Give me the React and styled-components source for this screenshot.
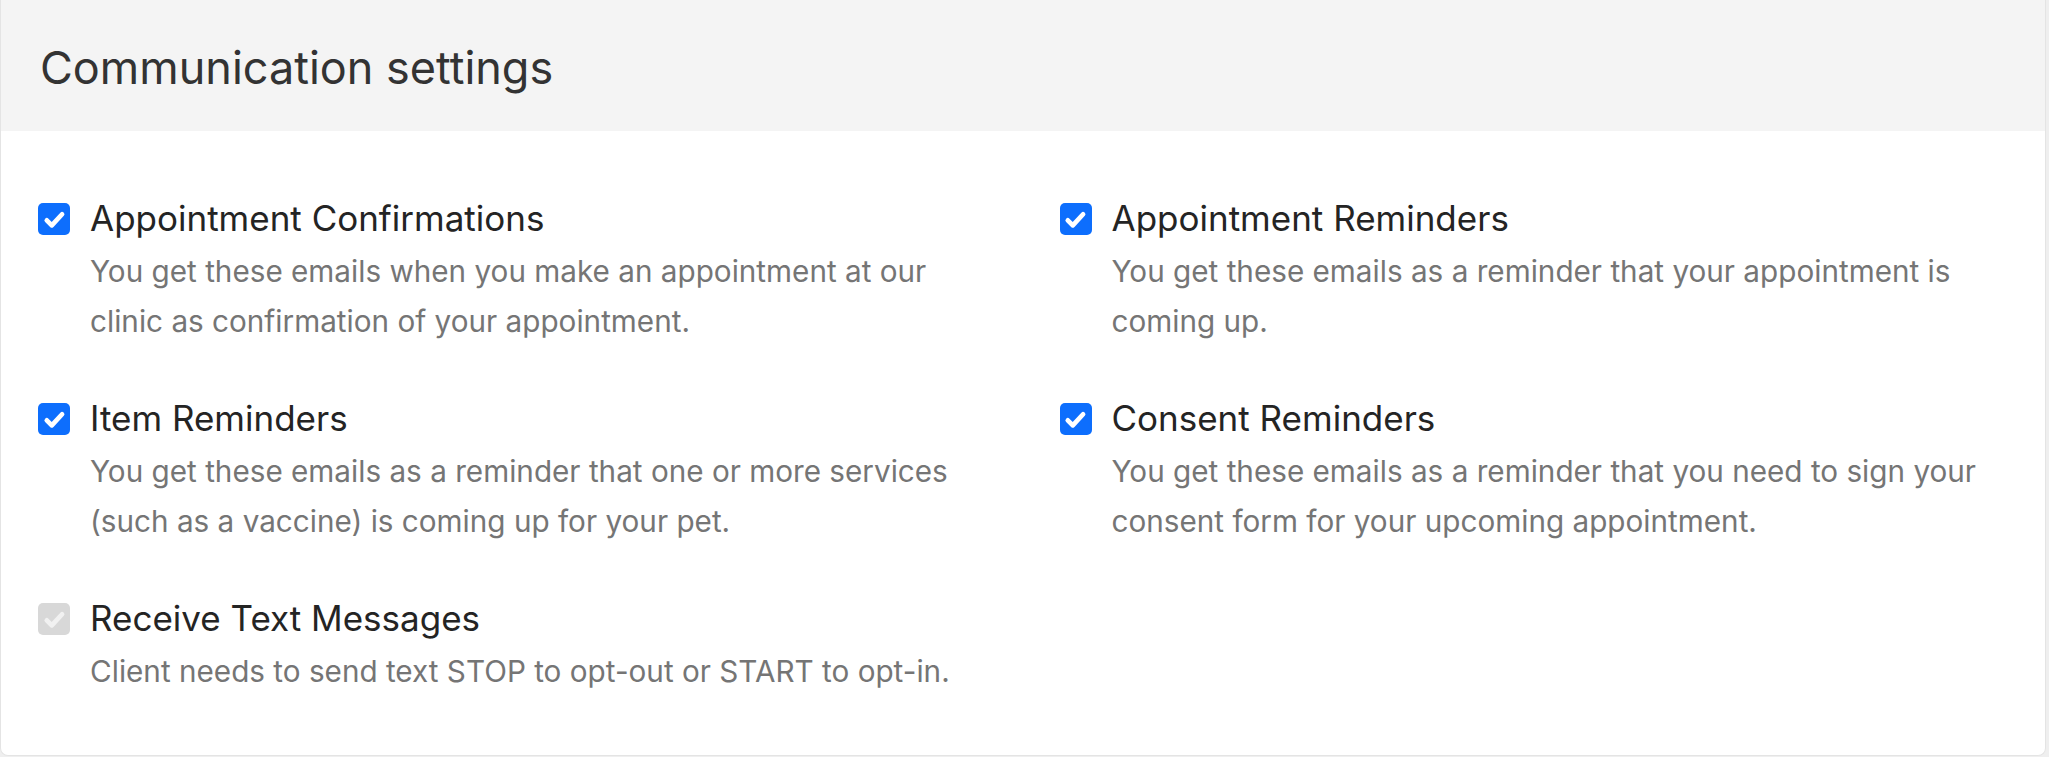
import React from "react";
import styled, { createGlobalStyle } from "styled-components";

const Global = createGlobalStyle`
  html, body { margin: 0; padding: 0; background: #efefef; }
  body { font-family: Inter, "Noto Sans", sans-serif; -webkit-font-smoothing: antialiased; }
`;

const Card = styled.section`
  width: 2046px;
  height: 756px;
  box-sizing: border-box;
  background: #ffffff;
  border: 1px solid #e4e4e4;
  border-top: none;
  border-radius: 0 0 8px 8px;
  overflow: hidden;
  display: flex;
  flex-direction: column;
`;

const Header = styled.header`
  height: 131px;
  flex: none;
  background: #f4f4f4;
  display: flex;
  align-items: center;
  padding: 5px 0 0 39px;
  box-sizing: border-box;
`;

const Title = styled.h2`
  margin: 0;
  font-size: 45px;
  font-weight: 400;
  color: #333333;
  line-height: 54px;
`;

const Body = styled.div`
  padding: 66px 37px 0 37px;
  display: grid;
  grid-template-columns: 1fr 1fr;
  column-gap: 73px;
  row-gap: 51px;
  align-content: start;
`;

const Option = styled.div`
  display: flex;
  align-items: flex-start;
  gap: 20px;
`;

const Box = styled.span`
  flex: none;
  width: 32px;
  height: 32px;
  margin-top: 6px;
  border-radius: 5px;
  background: ${(p) => (p.$disabled ? "#d8d8d8" : "#0d6efd")};
  display: flex;
  align-items: center;
  justify-content: center;
`;

const Text = styled.div`
  display: flex;
  flex-direction: column;
  min-width: 0;
`;

const Label = styled.div`
  font-size: 35px;
  line-height: 43px;
  color: #242424;
`;

const Desc = styled.div`
  margin-top: 6px;
  font-size: 29.7px;
  line-height: 50px;
  color: #757575;
`;

function Check({ disabled }) {
  return (
    <Box $disabled={disabled}>
      <svg width="27" height="27" viewBox="0 0 20 20" aria-hidden="true">
        <path
          d="M4.3 10.6l3.7 3.7l7.6-8.2"
          fill="none"
          stroke={disabled ? "#f1f1f1" : "#ffffff"}
          strokeWidth="3.5"
          strokeLinecap="round"
          strokeLinejoin="round"
        />
      </svg>
    </Box>
  );
}

const options = [
  {
    label: "Appointment Confirmations",
    desc: "You get these emails when you make an appointment at our clinic as confirmation of your appointment.",
  },
  {
    label: "Appointment Reminders",
    desc: "You get these emails as a reminder that your appointment is coming up.",
  },
  {
    label: "Item Reminders",
    desc: "You get these emails as a reminder that one or more services (such as a vaccine) is coming up for your pet.",
  },
  {
    label: "Consent Reminders",
    desc: "You get these emails as a reminder that you need to sign your consent form for your upcoming appointment.",
  },
  {
    label: "Receive Text Messages",
    desc: "Client needs to send text STOP to opt-out or START to opt-in.",
    disabled: true,
  },
];

export default function App() {
  return (
    <>
      <Global />
      <Card>
        <Header>
          <Title>Communication settings</Title>
        </Header>
        <Body>
          {options.map((o) => (
            <Option key={o.label}>
              <Check disabled={o.disabled} />
              <Text>
                <Label>{o.label}</Label>
                <Desc>{o.desc}</Desc>
              </Text>
            </Option>
          ))}
        </Body>
      </Card>
    </>
  );
}
